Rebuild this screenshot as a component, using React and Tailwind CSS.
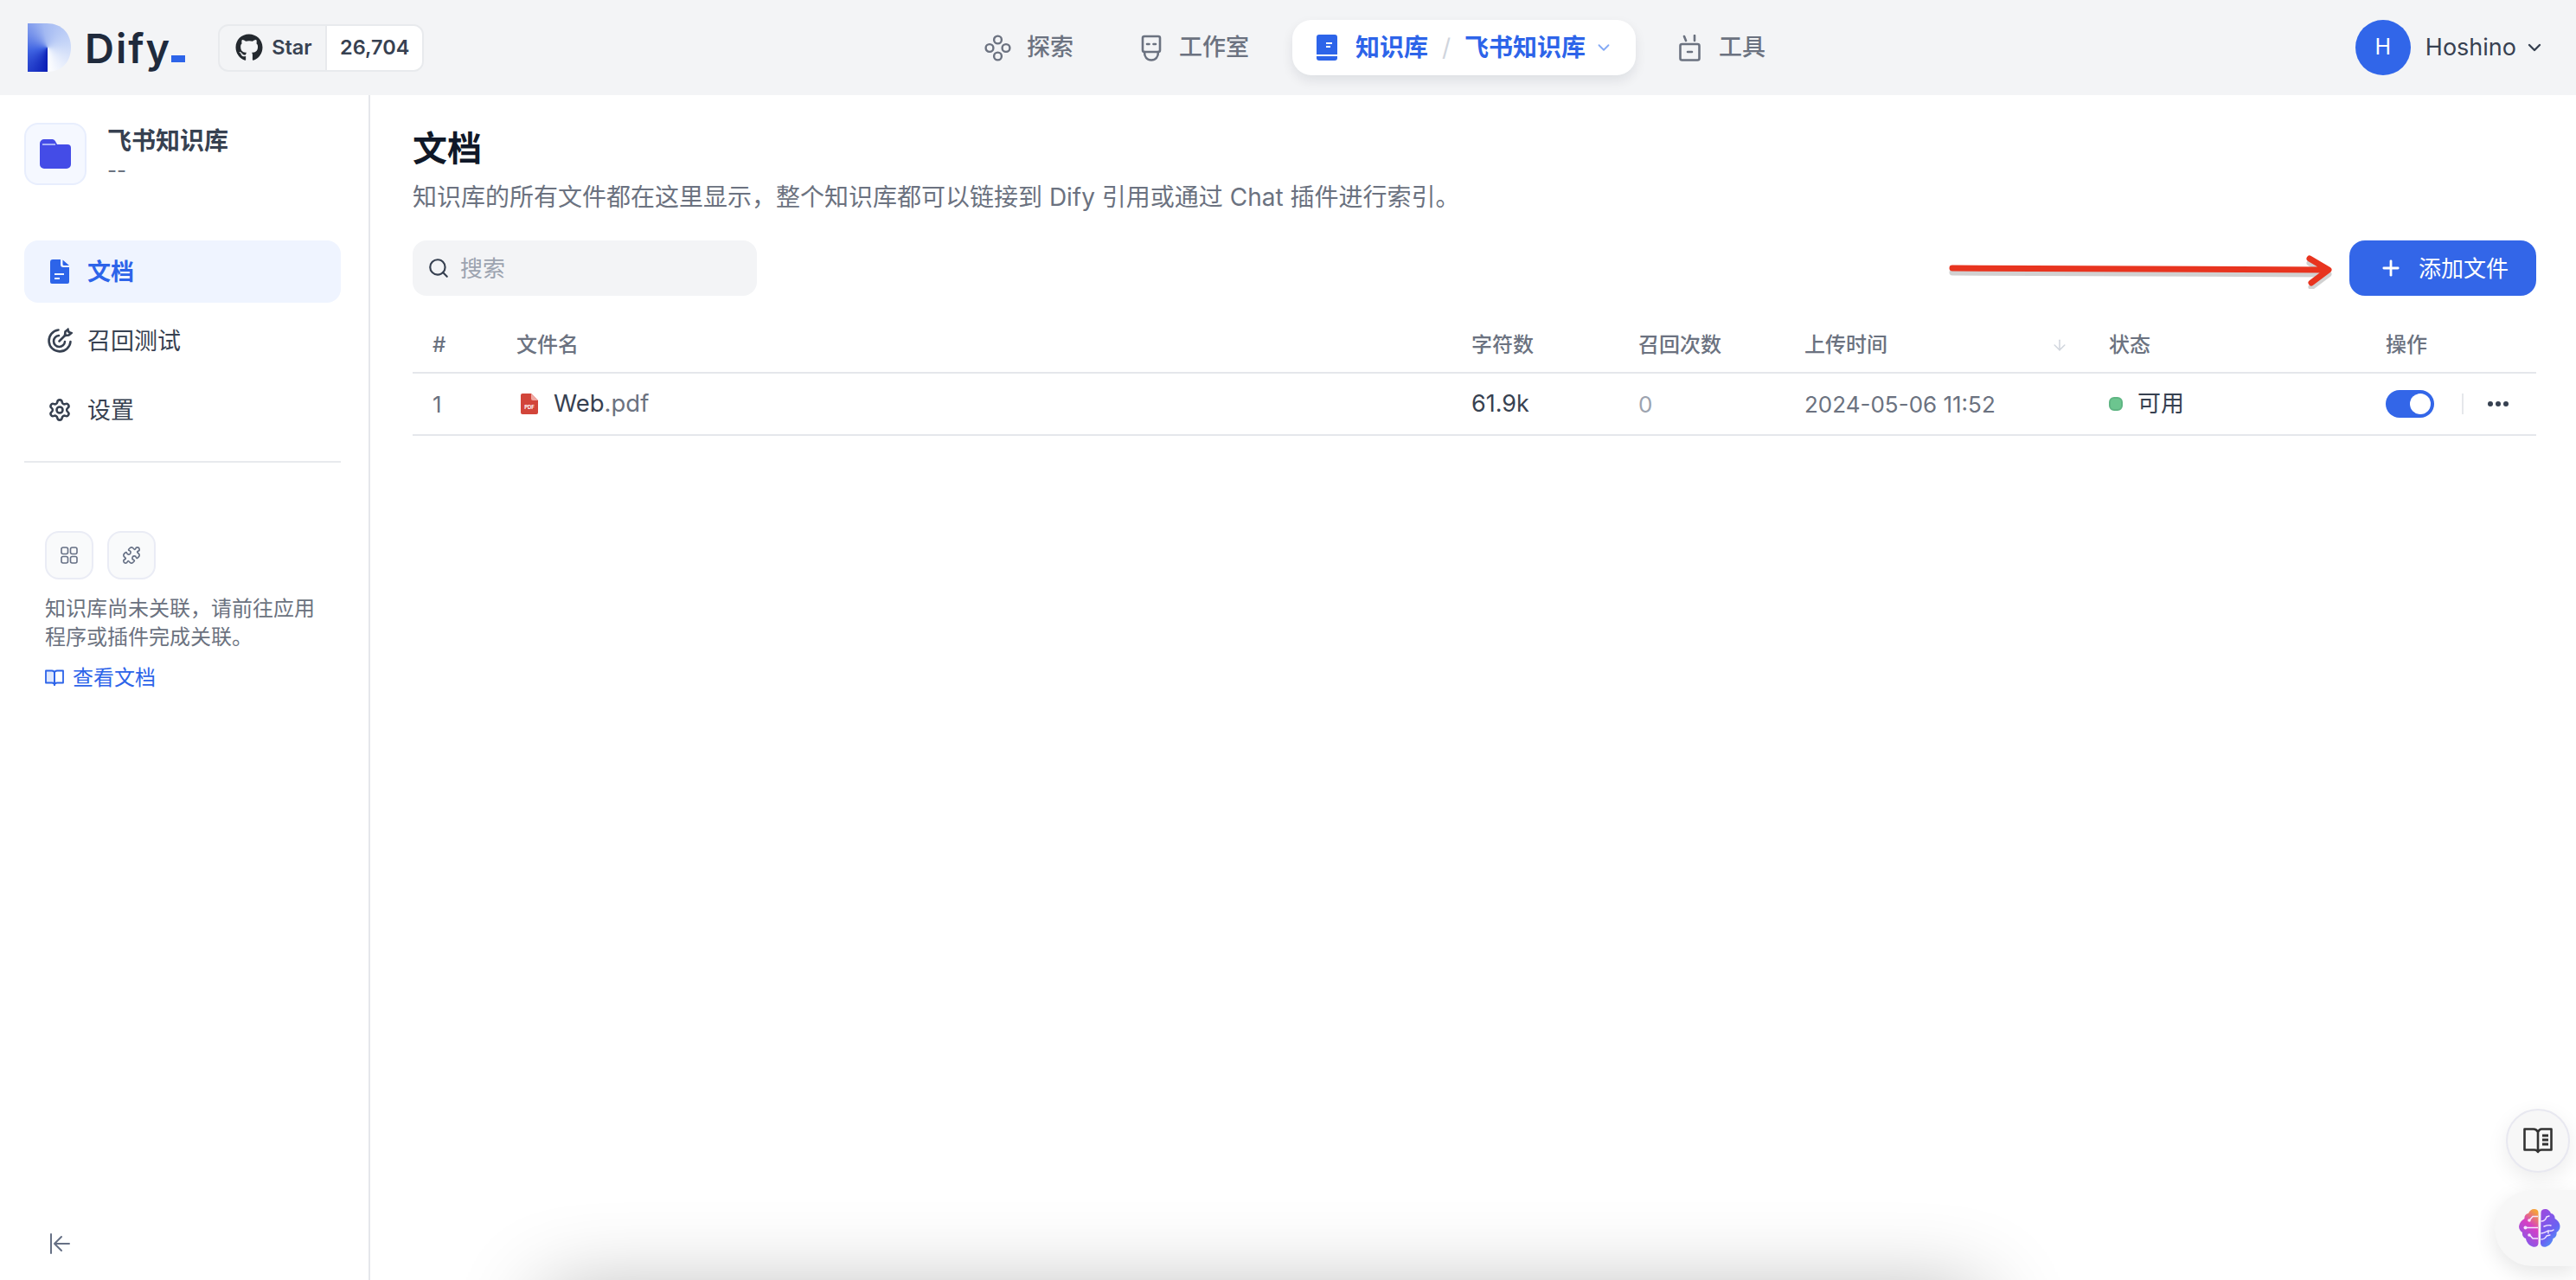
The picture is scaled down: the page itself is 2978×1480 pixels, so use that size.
import React from 'react'
import { FaGithub } from 'react-icons/fa'
import { ArrowDown, ChevronDown, Plus, Puzzle, Search, Settings } from 'lucide-react'

const ExploreIcon = () => (
  <svg width="31" height="31" viewBox="0 0 31 31" fill="none" stroke="#6b7280" strokeWidth="2.4">
    <circle cx="15.5" cy="6" r="4.4" />
    <circle cx="6" cy="15.5" r="4.4" />
    <circle cx="25" cy="15.5" r="4.4" />
    <circle cx="15.5" cy="25" r="4.4" />
  </svg>
)

const RobotIcon = () => (
  <svg width="28" height="31" viewBox="0 0 28 31" fill="none" stroke="#6b7280" strokeWidth="2.6" strokeLinecap="round">
    <path d="M6 2h16a2 2 0 0 1 2 2v14a2 2 0 0 1-2 2H6a2 2 0 0 1-2-2V4a2 2 0 0 1 2-2z" />
    <path d="M6 20c0 6 3 9.500 8 9.500s8-3.500 8-9.500" />
    <path d="M9 11h2.500M16.500 11h2.500" />
  </svg>
)

const BookIcon = () => (
  <svg width="24" height="30" viewBox="0 0 24 30">
    <rect width="24" height="30" rx="3" fill="#2d64e9" />
    <path d="M11 10h7M11 14h5" stroke="#fff" strokeWidth="2" />
    <path d="M0 24h24" stroke="#fff" strokeWidth="2" />
  </svg>
)

const ToolsIcon = () => (
  <svg width="25" height="31" viewBox="0 0 25 31" fill="none" stroke="#6b7280" strokeWidth="2.6" strokeLinecap="round">
    <rect x="1.500" y="11" width="22" height="18.500" rx="2" />
    <path d="M6 2l2 5M18 1v6M10 20h5" />
  </svg>
)

const FolderIcon = () => (
  <svg width="36" height="34" viewBox="0 0 36 34">
    <path d="M5 0h9c3 0 4 2 6 6h12a4 4 0 0 1 4 4v19a5 5 0 0 1-5 5H5a5 5 0 0 1-5-5V5a5 5 0 0 1 5-5z" fill="#444ce7" />
    <path d="M3 6h15" stroke="#c7d2fe" strokeWidth="1.500" />
  </svg>
)

const DocIcon = () => (
  <svg width="22" height="28" viewBox="0 0 22 28">
    <path d="M3 0h9v6a3 3 0 0 0 3 3h7v17a2 2 0 0 1-2 2H2a2 2 0 0 1-2-2V3a3 3 0 0 1 3-3z" fill="#2d64e9" />
    <path d="M14.500 0.500L22 7h-6a1.500 1.500 0 0 1-1.500-1.500z" fill="#2d64e9" />
    <path d="M5 17h11M5 22h6" stroke="#eff4ff" strokeWidth="2" />
  </svg>
)

const TargetIcon = () => (
  <svg width="30" height="30" viewBox="0 0 30 30" fill="none" stroke="#374151" strokeWidth="2.600" strokeLinecap="round">
    <path d="M13.500 2.500A12.500 12.500 0 1 0 27.500 16" />
    <path d="M14 9a6.500 6.500 0 1 0 7 7" />
    <path d="M14.500 15.500l7-7" />
    <path d="M21 9l.5-4.500 3-2.500 1 3 3 1-3 2.500z" />
  </svg>
)

const GridIcon = () => (
  <svg width="20" height="20" viewBox="0 0 20 20" fill="none" stroke="#667085" strokeWidth="1.600">
    <rect x="1" y="1" width="7.500" height="7.500" rx="2" />
    <rect x="11.500" y="1" width="7.500" height="7.500" rx="2" />
    <rect x="1" y="11.500" width="7.500" height="7.500" rx="2" />
    <rect x="11.500" y="11.500" width="7.500" height="7.500" rx="2" />
  </svg>
)

const LinkBookIcon = () => (
  <svg width="22" height="20" viewBox="0 0 22 20" fill="none" stroke="#2d64e9" strokeWidth="1.800" strokeLinejoin="round">
    <path d="M11 4c0-1.500-1-2.500-3-2.500H1v14h7c2 0 3 .800 3 2.500z" fill="#dfe8fd" />
    <path d="M11 4c0-1.500 1-2.500 3-2.500h7v14h-7c-2 0-3 .800-3 2.500z" />
  </svg>
)

const CollapseIcon = () => (
  <svg width="24" height="24" viewBox="0 0 24 24" fill="none" stroke="#667085" strokeWidth="2" strokeLinecap="round" strokeLinejoin="round">
    <path d="M2 1v22M23 12H6M14 4l-8 8 8 8" />
  </svg>
)

const PdfIcon = () => (
  <svg width="20" height="24" viewBox="0 0 20 24">
    <path d="M2 0h10l8 8v14a2 2 0 0 1-2 2H2a2 2 0 0 1-2-2V2a2 2 0 0 1 2-2z" fill="#d2453a" />
    <path d="M12 0l8 8h-6a2 2 0 0 1-2-2z" fill="#f0a8a2" />
    <text x="10" y="18" textAnchor="middle" fontSize="6" fontWeight="700" fill="#fff" fontFamily="Inter">PDF</text>
  </svg>
)

const OpenBookIcon = () => (
  <svg width="34" height="31" viewBox="0 0 34 31" fill="none" stroke="#333" strokeWidth="2.600" strokeLinejoin="round">
    <path d="M17 5c-1-2-3-3.500-5-3.500H1.500v24H13c2 0 3 .500 4 2.500 1-2 2-2.500 4-2.500h11.500v-24H21c-2 0-3 1.500-4 3.500zM17 5v23" />
    <path d="M22 9h7M22 14h7M22 19h7" strokeWidth="2.800" />
  </svg>
)

const BrainIcon = () => (
  <svg width="48" height="44" viewBox="0 0 48 44" fill="none">
    <defs>
      <linearGradient id="brainLeft" x1="0.700" y1="0" x2="0.300" y2="1">
        <stop offset="0" stopColor="#f5a13c" />
        <stop offset="0.400" stopColor="#d63fc4" />
        <stop offset="1" stopColor="#7a5cf0" />
      </linearGradient>
      <linearGradient id="brainRight" x1="0.200" y1="0" x2="0.800" y2="1">
        <stop offset="0" stopColor="#9a4be0" />
        <stop offset="0.600" stopColor="#6a62f2" />
        <stop offset="1" stopColor="#46a6f8" />
      </linearGradient>
    </defs>
    <path d="M22.500 4c0-2.500-2-4-5-4-3 0-5.500 2-6.500 5-3 .500-5 3-4.500 6C3 13 .500 16 0 20c0 3 1.500 5.500 4 7-.500 3 1 6 4 7 .500 4 3.500 8 8 9.500 3 1 6.500-.500 6.500-4z" fill="url(#brainLeft)" />
    <path d="M25.500 4c0-2.500 2-4 5-4 3 0 5.500 2 6.500 5 3 .500 5 3 4.500 6 3.500 2 6 5 6 9 0 3-1.500 5.500-4 7 .500 3-1 6-4 7-.500 4-3.500 8-8 9.500-3 1-6.500-.500-6.500-4z" fill="url(#brainRight)" />
    <path d="M22 21.500H8M22 8.500h-6l-3 3.500M22 34h-6l-3-3.500" stroke="#f5e8ff" strokeWidth="1.500" />
    <circle cx="7.500" cy="21.500" r="2" fill="#f5e8ff" />
    <circle cx="12" cy="13" r="1.800" fill="#f5e8ff" />
    <circle cx="12" cy="30" r="1.800" fill="#f5e8ff" />
    <path d="M26 14c4 0 5-2 6-5M32 9l3-1M26 28c3 0 6-2 8-3 2 0 4 1 6-1M34 25v3M29 20c3-1 6-2 8-1M26 35c3 0 5-2 6-4M32 31l4-1" stroke="#f5e8ff" strokeWidth="1.400" strokeLinecap="round" />
  </svg>
)

const NavItem = ({ icon, label, className = '' }) => (
  <div className={`flex items-center text-[27px] font-medium text-[#6b7280] ${className}`}>
    {icon}
    <span>{label}</span>
  </div>
)

const SideItem = ({ icon, label, active }) => (
  <div className={`flex h-[72px] items-center rounded-2xl text-[27px] ${active ? 'bg-[#eff4ff] font-semibold text-[#2d64e9]' : 'font-normal text-[#374151]'}`}>
    <div className="flex w-[73px] shrink-0 justify-center pl-[8px]">{icon}</div>
    <span className="pt-[2px]">{label}</span>
  </div>
)

const tableCols = 'grid grid-cols-[120px_1104px_193px_192px_352px_320px_174px] items-center'

const App = () => {
  return (
    <div className="relative flex h-[1480px] w-[2978px] flex-col overflow-hidden bg-white font-[family-name:Inter,'Noto_Sans_CJK_SC',sans-serif]">
      <header className="flex h-[110px] shrink-0 items-center bg-[#f3f4f6] pl-[32px]">
        <div className="flex w-[1106px] shrink-0 items-center">
          <div className="h-[56px] w-[50px] shrink-0 bg-[conic-gradient(from_180deg_at_46%_50%,#0a1db5_0deg,#3f63e2_80deg,#a3b9f2_170deg,#c8d7f8_260deg,#ffffff_360deg)] [clip-path:path('M0_0H22C40_0_50_12_50_28C50_44_40_56_22_56H0Z')]" />
          <span className="ml-[16px] text-[47px] leading-none font-semibold tracking-[2px] text-[#1f2a3c]">Dify</span>
          <div className="mt-[26px] h-[8px] w-[16px] bg-[#2d64e9]" />
          <div className="ml-[38px] flex h-[55px] w-[238px] overflow-hidden rounded-xl border-2 border-[#e8eaed] text-[23.5px] font-semibold text-[#374151]">
            <div className="flex w-[122px] items-center gap-[10px] pl-[18px]">
              <FaGithub className="h-[32px] w-[32px] shrink-0 text-[#24292f]" />
              <span>Star</span>
            </div>
            <div className="flex flex-1 items-center justify-center border-l-2 border-[#e8eaed] bg-white">26,704</div>
          </div>
        </div>

        <nav className="flex items-center">
          <NavItem className="w-[179px] gap-[18px]" icon={<ExploreIcon />} label="探索" />
          <NavItem className="w-[177px] gap-[18px]" icon={<RobotIcon />} label="工作室" />
          <div className="flex h-[64px] w-[397px] items-center rounded-[22px] bg-white pl-[28px] text-[28px] font-semibold text-[#2d64e9] shadow-[0_6px_14px_rgba(16,24,40,0.09)]">
            <BookIcon />
            <span className="ml-[21px]">知识库</span>
            <span className="mx-[16px] font-normal text-[#d0d5dd]">/</span>
            <span>飞书知识库</span>
            <ChevronDown className="ml-[10px] h-[22px] w-[22px] text-[#84a9f5]" strokeWidth={2} />
          </div>
          <NavItem className="ml-[50px] gap-[21px]" icon={<ToolsIcon />} label="工具" />
        </nav>

        <div className="ml-auto flex items-center pr-[36px]">
          <div className="flex h-[64px] w-[64px] items-center justify-center rounded-full bg-[#3166e9] text-[25px] text-white">H</div>
          <span className="ml-[17px] text-[27px] text-[#374151]">Hoshino</span>
          <ChevronDown className="ml-[9px] h-[24px] w-[24px] text-[#374151]" strokeWidth={2.4} />
        </div>
      </header>

      <div className="flex min-h-0 flex-1">
        <aside className="flex w-[428px] shrink-0 flex-col border-r-2 border-[#e5e7eb] pt-[32px] pr-[32px] pb-[30px] pl-[28px]">
          <div className="flex items-center">
            <div className="flex h-[72px] w-[72px] shrink-0 items-center justify-center rounded-2xl border-2 border-[#e8eefd] bg-[#f5f8ff]">
              <FolderIcon />
            </div>
            <div className="ml-[24px]">
              <div className="text-[28px] leading-[38px] font-semibold text-[#374151]">飞书知识库</div>
              <div className="text-[24px] leading-[30px] text-[#6b7280]">--</div>
            </div>
          </div>

          <nav className="mt-[64px] flex flex-col gap-2">
            <SideItem active icon={<DocIcon />} label="文档" />
            <SideItem icon={<TargetIcon />} label="召回测试" />
            <SideItem icon={<Settings className="h-[28px] w-[28px]" strokeWidth={2.200} />} label="设置" />
          </nav>
          <div className="mt-[23px] h-[2px] bg-[#e8eaed]" />

          <div className="mt-[79px] pl-[24px]">
            <div className="flex gap-[16px]">
              <div className="flex h-[56px] w-[56px] items-center justify-center rounded-2xl border-2 border-[#eaecf5] bg-[#f9fafb]">
                <GridIcon />
              </div>
              <div className="flex h-[56px] w-[56px] items-center justify-center rounded-2xl border-2 border-[#eaecf5] bg-[#f9fafb]">
                <Puzzle className="h-[22px] w-[22px] text-[#667085]" strokeWidth={1.800} />
              </div>
            </div>
            <p className="mt-[17px] w-[320px] text-[24px] leading-[33px] text-[#6b7280]">知识库尚未关联，请前往应用程序或插件完成关联。</p>
            <div className="mt-[14px] flex h-[33px] items-center gap-[10px] text-[24px] text-[#2d64e9]">
              <LinkBookIcon />
              <span>查看文档</span>
            </div>
          </div>

          <div className="mt-auto pl-[29px]">
            <CollapseIcon />
          </div>
        </aside>

        <main className="min-w-0 flex-1 pt-[32px] pr-[46px] pl-[49px]">
          <h1 className="text-[40px] leading-[60px] font-semibold text-[#101828]">文档</h1>
          <p className="mt-[6px] text-[28px] leading-[40px] text-[#6b7280]">知识库的所有文件都在这里显示，整个知识库都可以链接到 Dify 引用或通过 Chat 插件进行索引。</p>

          <div className="mt-[30px] flex h-[64px] items-center justify-between">
            <div className="flex h-[64px] w-[398px] items-center rounded-2xl bg-[#f3f4f6] pl-[17px]">
              <Search className="h-[26px] w-[26px] text-[#374151]" strokeWidth={2} />
              <span className="ml-[12px] text-[26px] text-[#9ca3af]">搜索</span>
            </div>
            <div className="flex h-[64px] w-[216px] items-center rounded-[18px] bg-[#3366e8] pl-[34px] text-[26px] text-white">
              <Plus className="h-[28px] w-[28px]" strokeWidth={2.400} />
              <span className="ml-[18px]">添加文件</span>
            </div>
          </div>

          <div className="mt-[23px]">
            <div className={`${tableCols} h-[67px] border-b-2 border-[#e5e7eb] pt-[2px] text-[24px] font-medium text-[#6b7280]`}>
              <div className="pl-[23px]">#</div>
              <div>文件名</div>
              <div>字符数</div>
              <div>召回次数</div>
              <div className="flex items-center justify-between pr-[47px]">
                <span>上传时间</span>
                <ArrowDown className="h-[20px] w-[20px] text-[#d0d5dd]" strokeWidth={1.800} />
              </div>
              <div>状态</div>
              <div>操作</div>
            </div>
            <div className={`${tableCols} h-[72px] border-b-2 border-[#e5e7eb] text-[26px] text-[#6b7280]`}>
              <div className="pl-[23px]">1</div>
              <div className="flex items-center pl-[5px]">
                <PdfIcon />
                <span className="ml-[18px] text-[27.500px]">
                  <span className="text-[#374151]">Web</span>.pdf
                </span>
              </div>
              <div className="text-[27px] text-[#374151]">61.9k</div>
              <div className="text-[#9ca3af]">0</div>
              <div>2024-05-06 11:52</div>
              <div className="flex items-center gap-[17px] text-[27px] text-[#374151]">
                <div className="h-[16px] w-[16px] rounded-[6px] border-2 border-[#5fb583] bg-[#6cc58f]" />
                <span>可用</span>
              </div>
              <div className="flex items-center">
                <div className="flex h-[32px] w-[56px] items-center justify-end rounded-full bg-[#3366e8] pr-[4px]">
                  <div className="h-[24px] w-[24px] rounded-full bg-white" />
                </div>
                <div className="ml-[32px] h-[24px] w-[2px] bg-[#e5e7eb]" />
                <div className="ml-[28px] flex gap-[3px]">
                  <div className="h-[6px] w-[6px] rounded-full bg-[#374151]" />
                  <div className="h-[6px] w-[6px] rounded-full bg-[#374151]" />
                  <div className="h-[6px] w-[6px] rounded-full bg-[#374151]" />
                </div>
              </div>
            </div>
          </div>
        </main>
      </div>

      {/* red annotation arrow */}
      <svg className="absolute top-[290px] left-[2250px]" width="452" height="44" viewBox="0 0 452 44" fill="none">
        <g stroke="#000" strokeOpacity="0.18" strokeWidth="7" strokeLinecap="round" strokeLinejoin="round" transform="translate(0 5)">
          <path d="M7 20L440 22M420 9l22 13-20 15" />
        </g>
        <path d="M7 20L440 22M420 9l22 13-20 15" stroke="#e8341f" strokeWidth="7" strokeLinecap="round" strokeLinejoin="round" />
      </svg>

      {/* floating help buttons */}
      <div className="absolute top-[1282px] left-[2897px] flex h-[74px] w-[74px] items-center justify-center rounded-full border-2 border-[#e8e8f0] bg-[#f7f7f7] shadow-[0_8px_24px_rgba(0,0,0,0.08)]">
        <OpenBookIcon />
      </div>
      <div className="absolute top-[1376px] right-0 flex h-[88px] w-[94px] items-center rounded-l-[44px] bg-[#f7f7f7] pl-[28px] shadow-[0_8px_24px_rgba(0,0,0,0.1)]">
        <BrainIcon />
      </div>

      {/* shadow of a panel sitting just below the window */}
      <div className="absolute top-[1495px] left-[630px] h-[100px] w-[1660px] shadow-[0_0_100px_rgba(0,0,0,0.3)]" />
    </div>
  )
}

export default App
